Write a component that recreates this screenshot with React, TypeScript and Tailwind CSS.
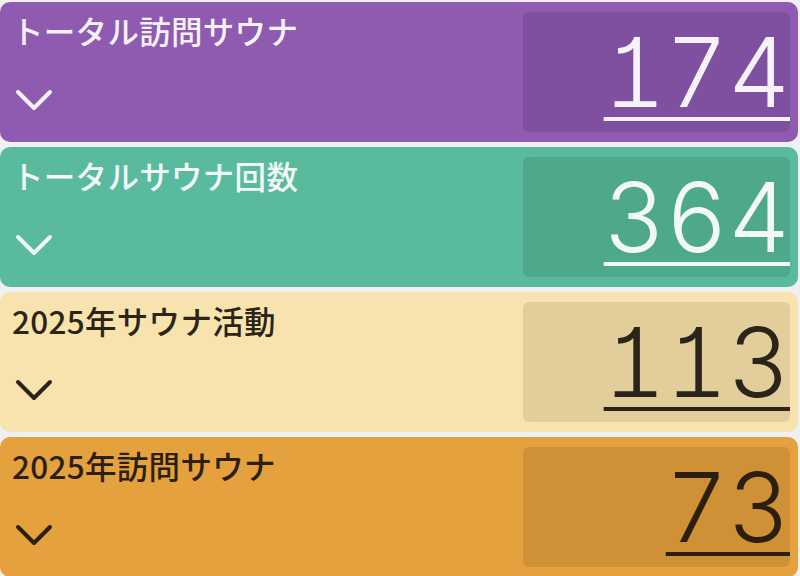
type Stat = {
  title: string;
  value: number;
  card: string;
  box: string;
  text: string;
};

const stats: Stat[] = [
  { title: "トータル訪問サウナ", value: 174, card: "bg-[#8f5bb0]", box: "bg-[#7e509f]", text: "text-[#f7f2fa]" },
  { title: "トータルサウナ回数", value: 364, card: "bg-[#59ba9d]", box: "bg-[#4ea88c]", text: "text-[#f2f8f6]" },
  { title: "2025年サウナ活動", value: 113, card: "bg-[#f8e2ae]", box: "bg-[#e2ce9b]", text: "text-[#2b2519]" },
  { title: "2025年訪問サウナ", value: 73, card: "bg-[#e5a13d]", box: "bg-[#cf9036]", text: "text-[#2b1f10]" },
];

const Chevron = () => (
  <svg width="38" height="24" viewBox="0 0 38 24" fill="none">
    <polyline
      points="3,4 19,20 35,4"
      stroke="currentColor"
      strokeWidth="4"
      strokeLinecap="round"
      strokeLinejoin="round"
    />
  </svg>
);

const StatCard = ({ stat }: { stat: Stat }) => (
  <div className={`flex h-[140px] shrink-0 justify-between rounded-[10px] ${stat.card} ${stat.text}`}>
    <div className="flex flex-col pl-3 pt-[9px]">
      <h2 className="text-[31.5px] font-medium leading-[38px] tracking-[0.3px] [font-family:'Noto_Sans_CJK_JP',sans-serif]">
        {stat.title}
      </h2>
      <div className="mt-[39px] pl-[3px]">
        <Chevron />
      </div>
    </div>
    <div className={`my-[10px] mr-2 flex w-[267px] items-start justify-end rounded-md ${stat.box}`}>
      <span className="mt-[12px] text-[96px] font-light leading-none underline decoration-[4px] underline-offset-[10px] [font-family:Inter,sans-serif] [font-feature-settings:'tnum','cv01']">
        {stat.value}
      </span>
    </div>
  </div>
);

export default function App() {
  return (
    <div className="flex h-[576px] w-[800px] flex-col gap-[5px] overflow-hidden bg-[#eef0f2] pr-[2px] pt-[2px]">
      {stats.map((s) => (
        <StatCard key={s.title} stat={s} />
      ))}
    </div>
  );
}
